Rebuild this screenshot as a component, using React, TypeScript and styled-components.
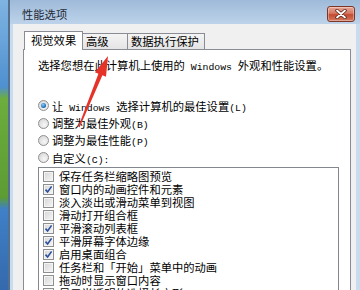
import React from 'react';
import styled, { createGlobalStyle } from 'styled-components';

const GlobalStyle = createGlobalStyle`
  html, body {
    margin: 0;
    padding: 0;
  }
  body {
    width: 360px;
    height: 290px;
    overflow: hidden;
    background: #f0f0f0;
  }
`;

const Screen = styled.div`
  position: relative;
  display: flex;
  width: 360px;
  height: 290px;
  overflow: hidden;
  font-family: "Noto Sans CJK SC", "Liberation Sans", sans-serif;
  font-size: 11.3px;
  color: #000;
`;

const Desktop = styled.div`
  width: 8px;
  flex-shrink: 0;
  background: linear-gradient(
    to bottom,
    #7fb4e2 0%,
    #4f90d0 30%,
    #6cad3d 34%,
    #5c9c33 68%,
    #3f80c6 72%,
    #3569ad 100%
  );
`;

const Window = styled.div`
  flex: 1;
  display: flex;
  flex-direction: column;
  min-width: 0;
  border-left: 2px solid #55708c;
  background: #c9dcef;
`;

const TitleBar = styled.div`
  height: 24px;
  box-sizing: border-box;
  flex-shrink: 0;
  display: flex;
  align-items: center;
  justify-content: space-between;
  padding: 4px 5px 0 12px;
  background: linear-gradient(to bottom, #9ebad9, #bdd3ea);
`;

const Title = styled.span`
  font-size: 11.3px;
  color: #1e2a38;
`;

const CloseButton = styled.div`
  width: 28px;
  height: 16px;
  box-sizing: border-box;
  display: flex;
  align-items: center;
  justify-content: center;
  border: 1px solid #7d3528;
  border-radius: 3px;
  background: linear-gradient(to bottom, #e7a797 0%, #d67761 45%, #c44a31 55%, #d47a5d 100%);
  box-shadow: inset 0 0 0 1px rgba(255, 255, 255, 0.35);
`;

const Client = styled.div`
  flex: 1;
  min-height: 0;
  display: flex;
  flex-direction: column;
  margin: 0 4px 0 3px;
  padding: 7px 5px 0 10px;
  background: #f0f0f0;
`;

const TabRow = styled.div`
  position: relative;
  z-index: 1;
  height: 18px;
  display: flex;
  align-items: flex-end;
  padding-left: 1px;
`;

const Tab = styled.div<{ $active?: boolean; $width: number }>`
  box-sizing: border-box;
  width: ${p => p.$width}px;
  height: ${p => (p.$active ? 19 : 16)}px;
  margin-bottom: ${p => (p.$active ? -1 : 0)}px;
  padding-left: ${p => (p.$active ? 6 : 3)}px;
  padding-top: ${p => (p.$active ? 1 : 0)}px;
  border: 1px solid #898c95;
  border-bottom: none;
  border-left: ${p => (p.$active ? '1px solid #898c95' : 'none')};
  background: ${p => (p.$active ? '#fff' : 'linear-gradient(to bottom, #f4f4f4, #e4e4e4)')};
  line-height: 15px;
  white-space: nowrap;
`;

const Panel = styled.div`
  flex: 1;
  min-height: 0;
  display: flex;
  flex-direction: column;
  border: 1px solid #898c95;
  border-bottom: none;
  background: #fff;
  padding: 8px 0 0 14px;
`;

const Latin = styled.span`
  font-family: "Liberation Mono", monospace;
  font-size: 9.8px;
`;

const Description = styled.div`
  line-height: 14px;
  white-space: nowrap;
`;

const RadioGroup = styled.div`
  margin-top: 22px;
  display: flex;
  flex-direction: column;
`;

const RadioRow = styled.div`
  height: 17.4px;
  display: flex;
  align-items: center;
  gap: 3px;
  white-space: nowrap;
`;

const RadioCircle = styled.span<{ $checked?: boolean }>`
  position: relative;
  width: 11px;
  height: 11px;
  box-sizing: border-box;
  flex-shrink: 0;
  border: 1px solid #8f8f8f;
  border-radius: 50%;
  background: radial-gradient(circle at 60% 65%, #f7f7f7 0%, #dcdcdc 70%, #cfcfcf 100%);

  &::after {
    content: '';
    display: ${p => (p.$checked ? 'block' : 'none')};
    position: absolute;
    left: 2px;
    top: 2px;
    width: 5px;
    height: 5px;
    border-radius: 50%;
    background: radial-gradient(circle at 40% 35%, #8fd0ff 0%, #2a78c2 55%, #153f75 100%);
  }
`;

const ListBox = styled.div`
  flex: 1;
  margin-right: 11px;
  border: 1px solid #828790;
  border-bottom: none;
  background: #fff;
  padding: 2px 0 0 4px;
  overflow: hidden;
`;

const Item = styled.div`
  height: 13px;
  display: flex;
  align-items: center;
  gap: 5px;
  white-space: nowrap;
`;

const ItemLabel = styled.span`
  display: block;
  height: 13px;
  line-height: 13px;
`;

const CheckBox = styled.span`
  width: 11px;
  height: 11px;
  box-sizing: border-box;
  flex-shrink: 0;
  display: flex;
  align-items: center;
  justify-content: center;
  border: 1px solid #8e8f8f;
  background: linear-gradient(135deg, #d6d6d6 0%, #f6f6f6 100%);
  box-shadow: inset 0 0 0 1px #f4f4f4;
`;

const Arrow = styled.svg`
  position: absolute;
  left: 0;
  top: 0;
  pointer-events: none;
`;

const effects: { label: string; checked: boolean }[] = [
  { label: '保存任务栏缩略图预览', checked: false },
  { label: '窗口内的动画控件和元素', checked: true },
  { label: '淡入淡出或滑动菜单到视图', checked: false },
  { label: '滑动打开组合框', checked: false },
  { label: '平滑滚动列表框', checked: true },
  { label: '平滑屏幕字体边缘', checked: true },
  { label: '启用桌面组合', checked: true },
  { label: '任务栏和「开始」菜单中的动画', checked: false },
  { label: '拖动时显示窗口内容', checked: false },
  { label: '显示半透明的选择长方形', checked: false },
];

const radios: { label: React.ReactNode; checked?: boolean }[] = [
  {
    label: (
      <>
        让<Latin> Windows </Latin>选择计算机的最佳设置<Latin>(L)</Latin>
      </>
    ),
    checked: true,
  },
  { label: <>调整为最佳外观<Latin>(B)</Latin></> },
  { label: <>调整为最佳性能<Latin>(P)</Latin></> },
  { label: <>自定义<Latin>(C):</Latin></> },
];

const CheckMark = () => (
  <svg width="9" height="9" viewBox="0 0 9 9">
    <path d="M1.5 4.6 L3.6 7 L7.6 1.4" fill="none" stroke="#2b4f9e" strokeWidth="1.6" />
  </svg>
);

const CloseGlyph = () => (
  <svg width="12" height="10" viewBox="0 0 12 10">
    <path d="M2 1.5 L10 8.5 M10 1.5 L2 8.5" stroke="#5a2318" strokeWidth="3.4" strokeLinecap="round" />
    <path d="M2 1.5 L10 8.5 M10 1.5 L2 8.5" stroke="#fff" strokeWidth="1.8" strokeLinecap="round" />
  </svg>
);

export default function App() {
  return (
    <Screen>
      <GlobalStyle />
      <Desktop />
      <Window>
        <TitleBar>
          <Title>性能选项</Title>
          <CloseButton>
            <CloseGlyph />
          </CloseButton>
        </TitleBar>
        <Client>
          <TabRow>
            <Tab $active $width={59}>视觉效果</Tab>
            <Tab $width={45}>高级</Tab>
            <Tab $width={77}>数据执行保护</Tab>
          </TabRow>
          <Panel>
            <Description>
              选择您想在此计算机上使用的<Latin> Windows </Latin>外观和性能设置。
            </Description>
            <RadioGroup>
              {radios.map((r, i) => (
                <RadioRow key={i}>
                  <RadioCircle $checked={r.checked} />
                  <span>{r.label}</span>
                </RadioRow>
              ))}
            </RadioGroup>
            <ListBox>
              {effects.map((e, i) => (
                <Item key={i}>
                  <CheckBox>{e.checked && <CheckMark />}</CheckBox>
                  <ItemLabel>{e.label}</ItemLabel>
                </Item>
              ))}
            </ListBox>
          </Panel>
        </Client>
      </Window>
      <Arrow width="360" height="290" viewBox="0 0 360 290">
        <polygon
          points="108,56 106,76.8 102.4,75.3 79.65,127.3 78.35,126.7 98.4,73.7 94.9,72.2"
          fill="#e5332a"
        />
      </Arrow>
    </Screen>
  );
}
